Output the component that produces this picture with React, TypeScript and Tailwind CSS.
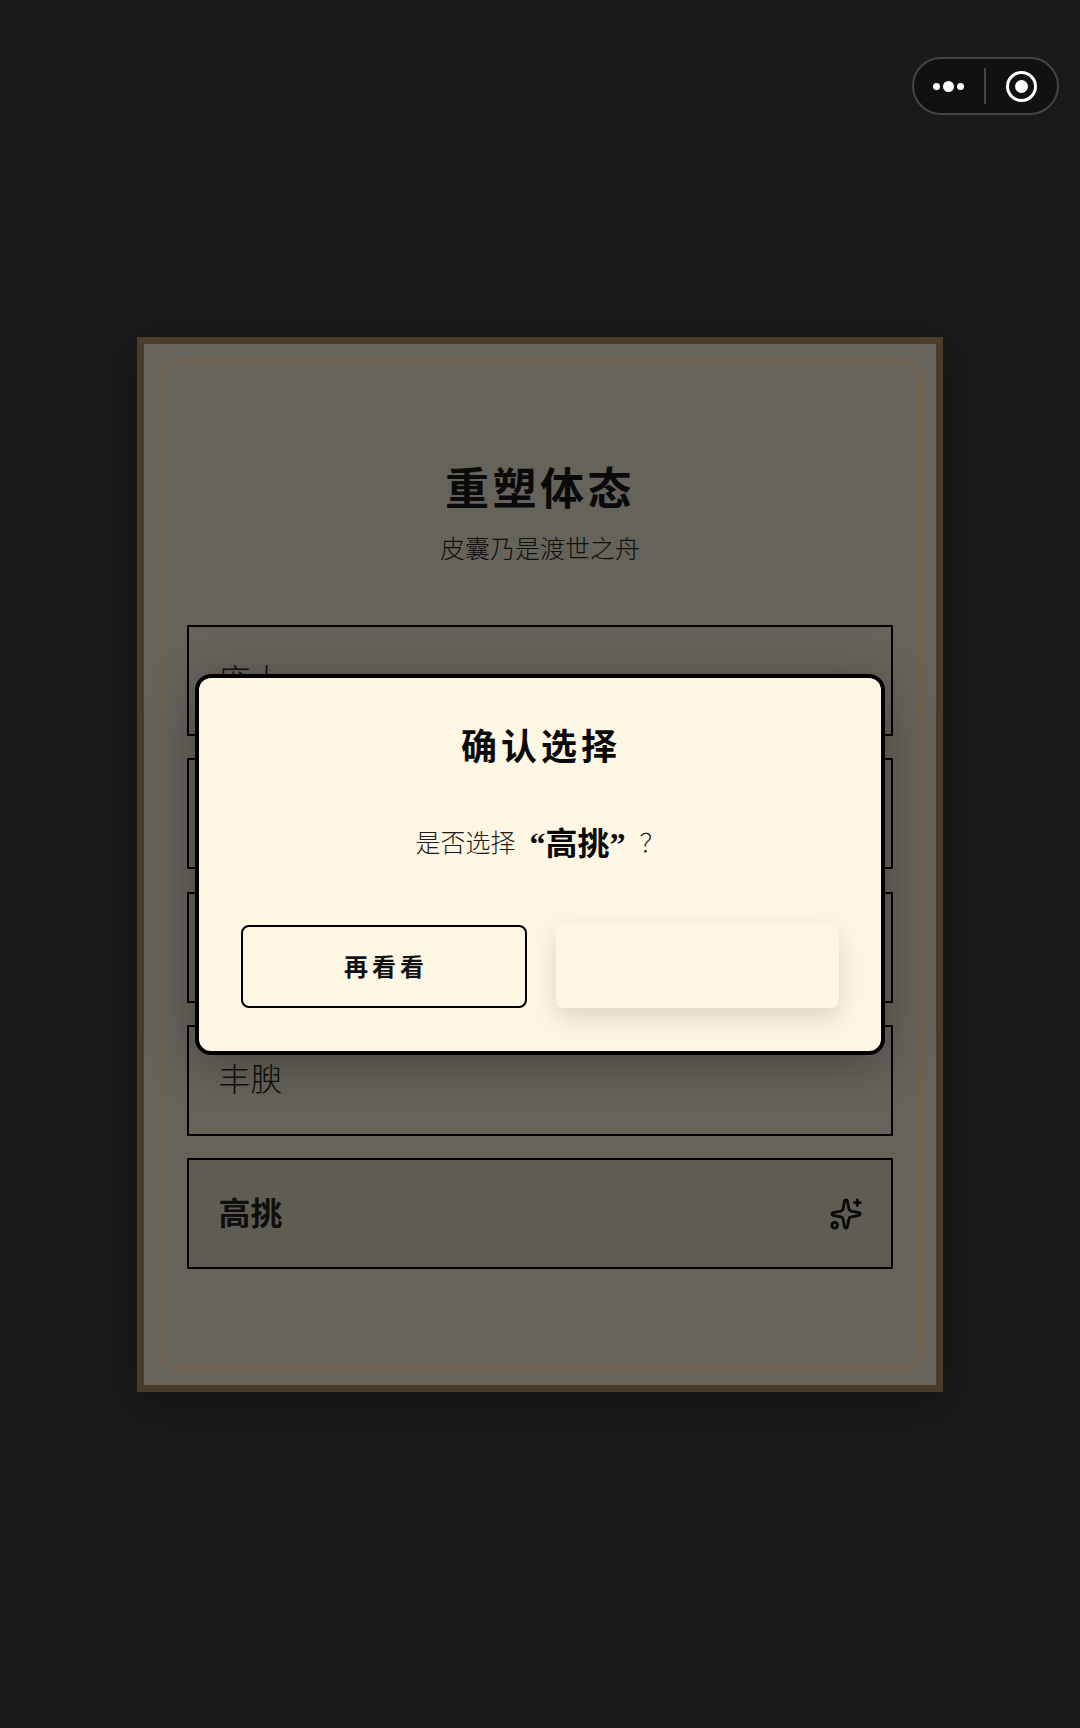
import { Sparkles } from 'lucide-react';

const rows = [
  { label: '庞大', selected: false },
  { label: '纤细', selected: false },
  { label: '匀称', selected: false },
  { label: '丰腴', selected: false },
  { label: '高挑', selected: true },
];

const fontStack = { fontFamily: '"Liberation Serif", "Noto Sans CJK SC", serif' };

function Capsule() {
  return (
    <div className="absolute top-[57px] left-[912px] flex h-[58px] w-[147px] items-center rounded-full border-2 border-[#444444] bg-[#111111]">
      <div className="flex w-[70px] items-center justify-center gap-[3px] pr-[2px]">
        <span className="h-[7px] w-[7px] rounded-full bg-white" />
        <span className="h-[11px] w-[11px] rounded-full bg-white" />
        <span className="h-[7px] w-[7px] rounded-full bg-white" />
      </div>
      <div className="h-[36px] w-[2px] bg-[#444444]" />
      <div className="flex flex-1 items-center justify-center">
        <div className="flex h-[31px] w-[31px] items-center justify-center rounded-full border-[3px] border-white">
          <span className="h-[13px] w-[13px] rounded-full bg-white" />
        </div>
      </div>
    </div>
  );
}

function ChoiceCard() {
  return (
    <div className="relative h-[1055px] w-[806px] border-[7px] border-[#4c3c2b] bg-[#66635b] px-[43px] pt-[117px] shadow-[0_10px_40px_rgba(0,0,0,0.3)]">
      <div className="absolute inset-[14px] rounded-[20px] border-[6px] border-[#6e6152] blur-[1px]" />
      <div className="relative">
        <h1 className="text-center text-[44px] leading-[60px] font-bold tracking-[3.5px] text-[#0a0a0a]">重塑体态</h1>
        <p className="mt-[11px] text-center text-[25px] leading-[36px] font-light text-[#0f0f0e]">皮囊乃是渡世之舟</p>
        <div className="mt-[57.5px] flex flex-col gap-[22.25px]">
          {rows.map((row) => (
            <div
              key={row.label}
              className={`flex h-[111px] items-center justify-between border-2 border-black pr-[28px] pl-[29.5px] ${row.selected ? 'bg-[#5f5c53]' : ''}`}
            >
              <span className={`text-[32px] text-[#0f0f0e] ${row.selected ? 'font-bold' : 'font-light'}`}>{row.label}</span>
              {row.selected && <Sparkles size={34} className="text-[#0a0a0a]" />}
            </div>
          ))}
        </div>
      </div>
    </div>
  );
}

function ConfirmDialog() {
  return (
    <div className="absolute inset-0 flex items-center justify-center">
      <div className="h-[381px] w-[690px] rounded-[16px] border-4 border-black bg-[#fdf6e3] px-[42px] pt-[45px] shadow-[0_10px_50px_rgba(0,0,0,0.3)]">
        <h2 className="pl-[2px] text-center text-[36px] leading-[50px] font-bold tracking-[4px] text-[#0a0a0a]">确认选择</h2>
        <p className="mt-[47px] flex h-[48px] items-center justify-center text-[25px] font-light text-[#1c1c1a]">
          是否选择
          <span className="mr-[14px] ml-[14px] text-[32px] font-bold text-[#0a0a0a]">“高挑”</span>
          ？
        </p>
        <div className="mt-[55px] flex items-end justify-between">
          <button className="h-[83px] w-[286px] rounded-[8px] border-2 border-black pt-[3px] pl-[4px] text-[24px] font-bold tracking-[4px] text-[#111111]">
            再看看
          </button>
          <button aria-label="确认" className="h-[85px] w-[283px] rounded-[8px] bg-[#fdf6e3] shadow-[0_10px_25px_rgba(0,0,0,0.13)]" />
        </div>
      </div>
    </div>
  );
}

export default function App() {
  return (
    <div className="relative flex h-[1728px] w-[1080px] items-center justify-center overflow-hidden bg-[#1a1a1a]" style={fontStack}>
      <ChoiceCard />
      <ConfirmDialog />
      <Capsule />
    </div>
  );
}
